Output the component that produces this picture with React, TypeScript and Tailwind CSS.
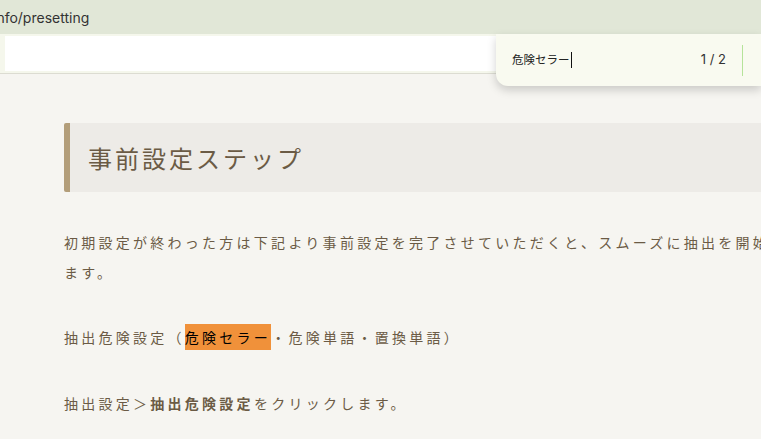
import React from 'react';

const jp = "font-['Noto_Sans_CJK_JP','Noto_Sans',sans-serif]";

function FindBar() {
  return (
    <div className="absolute left-[496px] right-0 top-[34px] h-[52px] rounded-bl-[12px] bg-[#f9faf0] shadow-[0_4px_10px_rgba(0,0,0,0.18)] flex items-center">
      <div className={`ml-[16px] flex items-center text-[11.5px] text-[#222] ${jp}`}>
        <span>危険セラー</span>
        <span className="ml-[1px] w-[1px] h-[16px] bg-[#111]" />
      </div>
      <span className="ml-auto mr-[16px] text-[13px] text-[#333] font-['Inter',sans-serif]">1 / 2</span>
      <div className="w-[1px] h-[31px] bg-[#b6e39a] mr-[18px]" />
    </div>
  );
}

export default function App() {
  return (
    <div className="relative w-[761px] h-[439px] overflow-hidden bg-[#f6f5f1]">
      {/* browser chrome */}
      <div className="h-[34px] bg-[#e1e7d7] flex items-center overflow-hidden">
        <span className="ml-[-7px] text-[14px] text-[#333] font-['Inter',sans-serif] whitespace-nowrap">info/presetting</span>
      </div>
      <div className="h-[40px] bg-[#f5f7ec] border-b border-[#dcdcd2] pl-[5px] pt-[2px]">
        <div className="h-[35px] bg-white" />
      </div>

      {/* page content */}
      <div className={`pl-[64px] pt-[49px] text-[#6b5b45] ${jp}`}>
        <div className="w-[760px] h-[69px] flex items-center rounded-[2px] bg-[#edebe7] border-l-[6px] border-[#b39e7a] pl-[18px]">
          <h1 className="text-[24px] tracking-[3px] font-normal text-[#6b5b45]">事前設定ステップ</h1>
        </div>

        <p className="w-[760px] mt-[35px] text-[14px] leading-[30px] tracking-[3.26px] whitespace-nowrap">
          初期設定が終わった方は下記より事前設定を完了させていただくと、スムーズに抽出を開始でき
          <br />
          ます。
        </p>

        <p className="w-[760px] mt-[35px] text-[14px] leading-[30px] tracking-[3.26px]">
          抽出危険設定（<span className="bg-[#f0913a] text-black py-[3px]">危険セラー</span>・危険単語・置換単語）
        </p>

        <p className="w-[760px] mt-[36px] text-[14px] leading-[30px] tracking-[3.26px]">
          抽出設定＞<strong className="font-bold">抽出危険設定</strong>をクリックします。
        </p>
      </div>

      <FindBar />
    </div>
  );
}
